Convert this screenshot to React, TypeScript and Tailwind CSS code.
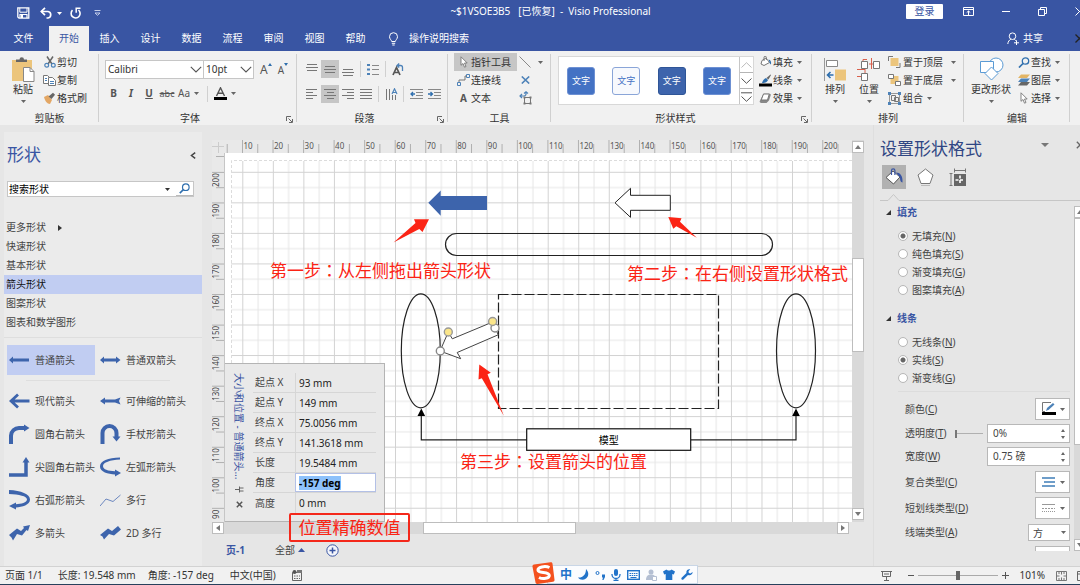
import React, { useEffect, useRef } from "react";

type Kids = { children?: React.ReactNode };

/* ---------- small shared pieces ---------- */

function Svg({ w, h, children, className = "" }: Kids & { w: number; h: number; className?: string }) {
  return (
    <svg width={w} height={h} viewBox={`0 0 ${w} ${h}`} fill="none" className={`shrink-0 ${className}`} aria-hidden="true">
      {children}
    </svg>
  );
}

function Caret({ className = "text-[#666]" }: { className?: string }) {
  return (
    <Svg w={5} h={3} className={className}>
      <path d="M0 0h5L2.5 3z" fill="currentColor" />
    </Svg>
  );
}

function Chevron() {
  return (
    <Svg w={12} h={7} className="pointer-events-none">
      <path d="M.8.8 6 6 11.2.8" stroke="#555" strokeWidth="1.1" />
    </Svg>
  );
}

function Launcher() {
  return (
    <button aria-label="对话框启动器" className="absolute right-1 bottom-0.5">
      <Svg w={7} h={7}>
        <path d="M.5 5V.5H5M2.5 2.5l3.500 3.500M6.500 3v3.500H3" stroke="#666" />
      </Svg>
    </button>
  );
}

function Group({ label, className, launcher, children }: Kids & { label: string; className: string; launcher?: boolean }) {
  return (
    <section aria-label={label} className={`relative flex shrink-0 flex-col pt-0.5 ${className}`}>
      <div className="flex h-[58px]">{children}</div>
      <div className="text-center leading-[14px] text-[#333]">{label}</div>
      {launcher && <Launcher />}
      <span className="absolute top-[3px] right-0 bottom-[3px] w-px bg-[#d0d0d0]" />
    </section>
  );
}

function Row({ icon, text, caret, className = "" }: { icon: React.ReactNode; text: string; caret?: boolean; className?: string }) {
  return (
    <button className={`flex h-[18px] items-center whitespace-nowrap ${className}`}>
      <span className="flex w-[15px] justify-center">{icon}</span>
      <span>{text}</span>
      {caret && <span className="ml-1"><Caret /></span>}
    </button>
  );
}

function BigButton({ icon, text, className }: { icon: React.ReactNode; text: string; className: string }) {
  return (
    <button className={`flex shrink-0 flex-col items-center pt-1 ${className}`}>
      {icon}
      <span className="leading-[14px] whitespace-nowrap">{text}</span>
      <span className="mt-1"><Caret /></span>
    </button>
  );
}

function Divider() {
  return <span className="mx-[3px] h-4 w-px bg-[#d0d0d0]" />;
}

/* ---------- title bar and tabs ---------- */

function TitleBar() {
  return (
    <header className="flex h-[26px] shrink-0 items-center overflow-hidden text-white">
      <div className="flex flex-1 items-center pl-[17px]">
        <button aria-label="保存">
          <Svg w={13} h={12}>
            <path d="M.8.8h11v10.400H2L.8 10z" stroke="#fff" strokeWidth="1.3" />
            <path d="M2.800 1v4.200h7.200V1" stroke="#fff" />
            <path d="M3 11V7.500h7V11" stroke="#fff" strokeWidth="1.2" />
            <path d="M4 8h2v3H4z" fill="#fff" />
          </Svg>
        </button>
        <button aria-label="撤消" className="ml-[10px] flex items-center gap-1">
          <Svg w={13} h={12}>
            <path d="M1 4.500h7a3.300 3.300 0 0 1 0 6.500H6.500" stroke="#fff" strokeWidth="1.7" />
            <path d="M5 .8 1.300 4.500 5 8.200" stroke="#fff" strokeWidth="1.7" />
          </Svg>
          <Caret className="text-white" />
        </button>
        <button aria-label="恢复" className="ml-[7px]">
          <Svg w={13} h={13}>
            <path d="M3.500 3.200A4.500 4.500 0 1 0 9.500 3" stroke="#fff" strokeWidth="1.6" />
            <path d="M11.500 1.200H7.200v4.500" stroke="#fff" strokeWidth="1.5" />
          </Svg>
        </button>
        <button aria-label="自定义快速访问工具栏" className="ml-3">
          <Svg w={7} h={6}>
            <path d="M.5.5h6M1 3l2.500 2.300L6 3z" stroke="#c5cfea" />
          </Svg>
        </button>
      </div>
      <h1 className="pb-[3px] whitespace-pre">~$1VSOE3B5   [已恢复]  -  Visio Professional</h1>
      <div className="-mr-1 flex flex-1 items-center justify-end">
        <button className="mb-[3px] h-[15px] w-[37px] rounded-[1px] bg-white leading-[15px] text-[#3955a3]">登录</button>
        <button aria-label="功能区显示选项" className="mb-1 ml-5">
          <Svg w={11} h={9}>
            <path d="M.5.5h10v8H.5zM.5 2.500h10M5.500 8V4M3.700 5.600l1.800-1.600 1.800 1.600" stroke="#fff" />
          </Svg>
        </button>
        <button aria-label="最小化" className="mb-1 ml-7">
          <Svg w={8} h={9}>
            <path d="M0 4.500h8" stroke="#fff" />
          </Svg>
        </button>
        <button aria-label="还原" className="mb-1 ml-7">
          <Svg w={9} h={9}>
            <path d="M.5 2.500h6v6h-6zM2.500 2.500v-2h6v6h-2" stroke="#fff" />
          </Svg>
        </button>
        <button aria-label="关闭" className="mb-1 ml-7">
          <Svg w={9} h={9}>
            <path d="m.5.5 8 8m0-8-8 8" stroke="#fff" />
          </Svg>
        </button>
      </div>
    </header>
  );
}

function Tabs() {
  const tabs = ["插入", "设计", "数据", "流程", "审阅", "视图", "帮助"];
  return (
    <nav className="flex h-[25px] shrink-0 items-stretch overflow-hidden text-white">
      <button className="w-[47px]">文件</button>
      <button className="ml-0.5 w-10 bg-[#f1f1f1] text-[#3955a3]">开始</button>
      {tabs.map((t) => (
        <button key={t} className="w-[41px]">{t}</button>
      ))}
      <button className="ml-3 flex items-center gap-[10px]">
        <Svg w={11} h={14}>
          <path d="M3.700 9.500C3.500 8 1.500 7 1.500 4.700a4 4 0 0 1 8 0C9.500 7 7.500 8 7.300 9.500zM3.800 11.300h3.400M4.300 13h2.400" stroke="#fff" />
        </Svg>
        操作说明搜索
      </button>
      <div className="flex-1" />
      <button className="flex items-center gap-1">
        <Svg w={12} h={13}>
          <circle cx="5.5" cy="4.2" r="3.3" stroke="#fff" />
          <path d="M.8 12c.2-2.500 1.500-4 3-4.700M7.300 7.300c.8.4 1.200.8 1.600 1.500M7 10.800h5M9.500 8.300v5" stroke="#fff" />
        </Svg>
        共享
      </button>
      <button aria-label="反馈" className="-mr-1 ml-8">
        <Svg w={9} h={9}>
          <path d="m.5.5 8 8m0-8-8 8" stroke="#222" strokeWidth="1.3" />
        </Svg>
      </button>
    </nav>
  );
}

/* ---------- ribbon ---------- */

function ClipboardGroup() {
  return (
    <Group label="剪贴板" className="w-[99px]">
      <BigButton
        className="w-[42px] pl-1"
        text="粘贴"
        icon={
          <Svg w={24} h={25}>
            <path d="M1 3h20v21H1z" fill="#ecc57c" />
            <path d="M5 5V2.500h3.500a2 2 0 0 1 4.500 0H16V5z" fill="#666" />
            <path d="M12.500 10.500H19l4 4v10H12.500z" fill="#fff" stroke="#888" />
            <path d="M19 10.500v4h4" stroke="#888" />
          </Svg>
        }
      />
      <div>
        <Row
          text="剪切"
          icon={
            <Svg w={12} h={12}>
              <path d="m3 .5 5 7.500M9 .5 4 8" stroke="#666" strokeWidth="1.5" />
              <circle cx="2.7" cy="9.3" r="1.9" stroke="#4d82b8" strokeWidth="1.2" />
              <circle cx="9.3" cy="9.3" r="1.9" stroke="#4d82b8" strokeWidth="1.2" />
            </Svg>
          }
        />
        <Row
          text="复制"
          icon={
            <Svg w={13} h={11}>
              <path d="M.5.5h4l2 2v6h-6z" fill="#fff" stroke="#777" />
              <path d="M5.500 2.500h4l3 3v5h-7z" fill="#fff" stroke="#777" />
              <path d="M7 6.500h4M7 8.500h4M2 3.500h2M2 5.500h2" stroke="#4d82b8" />
            </Svg>
          }
        />
        <Row
          text="格式刷"
          icon={
            <Svg w={13} h={12}>
              <path d="M1 5l4-2 4 5-2 4c-3 0-5-3-6-7z" fill="#e3a765" />
              <path d="M5.500 4.500 10 .8l2 2L8.500 7z" fill="#666" />
            </Svg>
          }
        />
      </div>
    </Group>
  );
}

function FontGroup() {
  return (
    <Group label="字体" className="w-[198px] pr-4" launcher>
      <div className="flex flex-col pt-[7px] pl-1.5">
        <div className="flex items-center">
          <div className="relative flex items-center">
            <select aria-label="字体" className="h-[19px] w-[99px] appearance-none border border-[#c6c6c6] bg-white pl-0.5">
              <option>Calibri</option>
            </select>
            <span className="pointer-events-none absolute right-0.5"><Chevron /></span>
          </div>
          <div className="relative flex items-center">
            <select aria-label="字号" className="-ml-px h-[19px] w-[51px] appearance-none border border-[#c6c6c6] bg-white pl-0.5">
              <option>10pt</option>
            </select>
            <span className="pointer-events-none absolute right-0.5"><Chevron /></span>
          </div>
          <button aria-label="增大字号" className="ml-1.5 flex text-[12px] leading-[14px] text-[#555]">
            A
            <Svg w={4} h={3}><path d="M0 3h4L2 0z" fill="#2f6fae" /></Svg>
          </button>
          <button aria-label="减小字号" className="ml-1.5 flex text-[10px] leading-[14px] text-[#555]">
            A
            <Svg w={4} h={3}><path d="M0 0h4L2 3z" fill="#2f6fae" /></Svg>
          </button>
        </div>
        <div className="mt-[5px] flex h-[19px] items-center text-[#555]">
          <button className="w-[17px] font-bold">B</button>
          <button className="w-[18px] font-bold italic">I</button>
          <button className="w-[18px] font-bold underline">U</button>
          <button className="w-[18px] text-[9px] line-through">abc</button>
          <button className="flex items-center gap-1 pl-0.5">Aa <Caret /></button>
          <span className="mr-1.5 ml-2 h-4 w-px bg-[#d0d0d0]" />
          <button aria-label="字体颜色" className="flex items-center gap-1">
            <Svg w={13} h={14}>
              <path d="M2.500 9 6.500.8 10.500 9M4 6.300h5" stroke="#555" strokeWidth="1.4" />
              <path d="M0 10h13v3H0z" fill="#000" />
            </Svg>
            <Caret />
          </button>
        </div>
      </div>
    </Group>
  );
}

function LinesIcon({ d }: { d: string }) {
  return (
    <Svg w={12} h={13}>
      <path d={d} stroke="#777" />
    </Svg>
  );
}

function ParaButton({ label, on, children }: Kids & { label: string; on?: boolean }) {
  return (
    <button aria-label={label} className={`flex h-[18px] w-[18px] shrink-0 items-center justify-center ${on ? "bg-[#c6c6c6]" : ""}`}>
      {children}
    </button>
  );
}

function ParagraphGroup() {
  return (
    <Group label="段落" className="w-[151px] pr-4" launcher>
      <div className="flex flex-col gap-[7px] pt-[7px] pl-1.5">
        <div className="flex items-center">
          <ParaButton label="顶端对齐"><LinesIcon d="M1 1.500h10M0 4.500h12M1 7.500h10" /></ParaButton>
          <ParaButton label="中部对齐" on><LinesIcon d="M1 3.500h10M0 6.500h12M1 9.500h10" /></ParaButton>
          <ParaButton label="底端对齐"><LinesIcon d="M1 6.500h10M0 9.500h12M1 12.500h10" /></ParaButton>
          <Divider />
          <ParaButton label="项目符号">
            <Svg w={12} h={13}>
              <path d="M0 1h3v2H0zM0 5.500h3v2H0zM0 10h3v2H0z" fill="#4d82b8" />
              <path d="M5 2.500h7M5 6.500h7M5 11.500h7" stroke="#888" />
            </Svg>
          </ParaButton>
          <Divider />
          <ParaButton label="旋转文本">
            <Svg w={12} h={13}>
              <path d="M1 12 4.500 4.500 8 12M2.500 9.500h4" stroke="#555" strokeWidth="1.7" />
              <path d="M5 2.500h3.500a2 2 0 0 1 2 2V8M7.200.5 5 2.500l2.200 2" stroke="#4d82b8" strokeWidth="1.3" />
            </Svg>
          </ParaButton>
        </div>
        <div className="flex items-center">
          <ParaButton label="左对齐"><LinesIcon d="M0 1.500h11M0 4.500h7M0 7.500h11M0 10.500h7" /></ParaButton>
          <ParaButton label="居中" on><LinesIcon d="M0 1.500h12M3 4.500h7M0 7.500h12M3 10.500h7" /></ParaButton>
          <ParaButton label="右对齐"><LinesIcon d="M0 1.500h12M5 4.500h7M0 7.500h12M5 10.500h7" /></ParaButton>
          <ParaButton label="两端对齐"><LinesIcon d="M0 1.500h12M0 4.500h12M0 7.500h12M0 10.500h12" /></ParaButton>
          <Divider />
          <ParaButton label="文字方向">
            <Svg w={13} h={13}>
              <path d="M1.500 1v11M4.500 1v11M7.500 7v5M10.500 7v5" stroke="#777" />
              <path d="M7 6 9.500.8 12 6M8 4.500h3" stroke="#4d82b8" strokeWidth="1.2" />
            </Svg>
          </ParaButton>
          <Divider />
          <ParaButton label="减少缩进">
            <Svg w={13} h={11}>
              <path d="M0 .5h13M6 3.500h7M6 6.500h7M0 9.500h13" stroke="#888" />
              <path d="M5 5H1M3 3 1 5l2 2" stroke="#2f6fae" strokeWidth="1.3" />
            </Svg>
          </ParaButton>
          <ParaButton label="增加缩进">
            <Svg w={13} h={11}>
              <path d="M0 .5h13M6 3.500h7M6 6.500h7M0 9.500h13" stroke="#888" />
              <path d="M0 5h4M2.500 3l2 2-2 2" stroke="#2f6fae" strokeWidth="1.3" />
            </Svg>
          </ParaButton>
        </div>
      </div>
    </Group>
  );
}

const Pointer = (
  <Svg w={8} h={12}>
    <path d="M1 .8v8.500l2-1.800 1.500 3.700 1.500-.7-1.500-3.500h2.700z" fill="#fff" stroke="#777" strokeWidth=".9" />
  </Svg>
);

function ToolsGroup() {
  return (
    <Group label="工具" className="w-[103px]">
      <div className="pl-1.5">
        <Row className="w-[63px] bg-[#c6c6c6] pl-0.5" text="指针工具" icon={Pointer} />
        <Row
          className="pl-0.5"
          text="连接线"
          icon={
            <Svg w={14} h={12}>
              <path d="M.5 8.500h3v3h-3zM9.500.5h3v3h-3z" stroke="#4d82b8" />
              <path d="M2 8V6h6V2h1.500" stroke="#777" />
            </Svg>
          }
        />
        <Row
          className="pl-0.5"
          text="文本"
          icon={<span className="font-bold text-[#555]">A</span>}
        />
      </div>
      <div className="ml-[2px]">
        <button aria-label="线条" className="flex h-[18px] items-center gap-[7px]">
          <Svg w={12} h={12}><path d="m.5.5 11 11" stroke="#888" /></Svg>
          <Caret />
        </button>
        <button aria-label="连接点" className="flex h-[18px] items-center pl-0.5">
          <Svg w={9} h={8}><path d="m.8.5 7.400 7M8.200.5.8 7.500" stroke="#4d82b8" strokeWidth="1.6" /></Svg>
        </button>
        <button aria-label="文本块" className="flex h-[18px] items-center">
          <Svg w={14} h={14}>
            <path d="M1 5h4a2 2 0 0 0 2-2V1M5 2.500 7 .8l2 1.700M3 3 1 5l2 2" stroke="#4d82b8" strokeWidth="1.2" />
            <path d="M5.500 6.500h6v6h-6z" stroke="#777" />
            <path d="M4.500 5.500h2v2h-2zM10.500 5.500h2v2h-2zM4.500 11.500h2v2h-2zM10.500 11.500h2v2h-2z" fill="#777" />
          </Svg>
        </button>
      </div>
    </Group>
  );
}

function StylesGroup() {
  const tiles = [
    "bg-[#4472c4] border-[#6d90d3] text-white",
    "bg-[#f7f9fd] border-[#8aa5d8] text-[#4472c4]",
    "bg-[#3d64ac] border-[#2f5597] text-white",
    "bg-[#4472c4] border-[#6d90d3] text-white",
  ];
  return (
    <Group label="形状样式" className="w-[261px] pr-3" launcher>
      <div className="mt-[3px] ml-[7px] flex h-[49px] w-[196px] shrink-0 border border-[#d8d8d8] bg-white">
        <div className="flex flex-1 items-center justify-between pr-2 pl-2">
          {tiles.map((t, i) => (
            <button key={i} className={`h-7 w-7 rounded-[3px] border text-[9px] leading-[26px] ${t}`}>文字</button>
          ))}
        </div>
        <div className="flex w-[14px] flex-col divide-y divide-[#b5b5b5] border-l border-[#c6c6c6]">
          <button aria-label="上一行" className="flex flex-1 items-center justify-center">
            <Svg w={11} h={6}><path d="M.5 5.500 5.500.7l5 4.800" stroke="#bbb" /></Svg>
          </button>
          <button aria-label="下一行" className="flex flex-1 items-center justify-center">
            <Svg w={11} h={6}><path d="m.5.5 5 4.800 5-4.800" stroke="#555" /></Svg>
          </button>
          <button aria-label="其他" className="flex flex-1 items-center justify-center">
            <Svg w={11} h={10}><path d="M0 .8h11M.5 4.500l5 4.800 5-4.800" stroke="#555" /></Svg>
          </button>
        </div>
      </div>
      <div className="ml-1">
        <Row
          caret
          text="填充"
          icon={
            <Svg w={13} h={12}>
              <path d="M3 4.500 7 2l3.500 4.500L5 9.500 2 8z" fill="#fff" stroke="#777" />
              <path d="M5 5V1.500a1.200 1.200 0 0 1 2.400 0V4" stroke="#777" />
              <path d="M9.500 3.500c2 .5 3 2 2.500 5-1-.5-1.500-1.500-1.500-2.500z" fill="#2f6fae" />
            </Svg>
          }
        />
        <Row
          caret
          text="线条"
          icon={
            <Svg w={13} h={13}>
              <path d="M0 9.500h13v3H0z" fill="#000" />
              <path d="M3 9c1-3 2-4 4-5l2 2c-1 2-2 3-6 3z" fill="#2f6fae" />
              <path d="m7.500 4 4-3.500.5.5-2.500 4.500z" fill="#666" />
            </Svg>
          }
        />
        <Row
          caret
          text="效果"
          icon={
            <Svg w={13} h={11}>
              <path d="M4.500.8h6a1.200 1.200 0 0 1 1.200 1.500L10 7.500 7.500 10H2.200A1.500 1.500 0 0 1 .8 8z" fill="#888" />
              <path d="M4.500 1h5.800L8.500 7H2.200z" fill="#fff" stroke="#777" />
            </Svg>
          }
        />
      </div>
    </Group>
  );
}

function ArrangeItem({ icon, text, wide }: { icon: React.ReactNode; text: string; wide?: boolean }) {
  return (
    <button className="flex h-[18px] items-center whitespace-nowrap">
      <span className="flex w-[15px]">{icon}</span>
      {text}
      <span className={wide ? "ml-2" : "ml-1"}><Caret /></span>
    </button>
  );
}

function ArrangeGroup() {
  return (
    <Group label="排列" className="w-[152px]">
      <div className="flex pl-0.5">
        <BigButton
          className="w-[42px]"
          text="排列"
          icon={
            <Svg w={24} h={25}>
              <path d="M1.500 1v23" stroke="#999" />
              <path d="M3.500 3.500h11v6h-11z" fill="#fff" stroke="#888" />
              <path d="M12 12.500h11v11H12z" fill="#ecc57c" />
              <path d="M10.500 18H4.500M7.500 15l-3 3 3 3" stroke="#2f6fae" strokeWidth="1.6" />
            </Svg>
          }
        />
        <BigButton
          className="w-[26px]"
          text="位置"
          icon={
            <Svg w={24} h={25}>
              <path d="M6 7V2.500h4M12 7h5M14.500 1v11M0 12.500h8M0 19.500h4M8 12v4" stroke="#d9604c" />
              <path d="M4.500 4.500h6v7h-6zM16.500 4.500h6v7h-6zM4.500 16.500h6v7h-6z" fill="#fff" stroke="#777" />
            </Svg>
          }
        />
        <div className="ml-1.5">
          <ArrangeItem
            wide
            text="置于顶层"
            icon={
              <Svg w={13} h={12}>
                <path d="M.5 5V.5H5M8 11.500h4V7" stroke="#777" />
                <path d="M2.500 2h8v8h-8z" fill="#ecc57c" />
              </Svg>
            }
          />
          <ArrangeItem
            wide
            text="置于底层"
            icon={
              <Svg w={13} h={12}>
                <path d="M2.500 2h8v8h-8z" fill="#ecc57c" />
                <path d="M.5.5h5v4h-5zM7.500 7.500h5v4h-5z" fill="#fff" stroke="#777" />
              </Svg>
            }
          />
          <ArrangeItem
            text="组合"
            icon={
              <Svg w={13} h={13}>
                <path d="M1.500 1.500h10v10h-10z" stroke="#999" />
                <path d="M3.500 3.500h4v5h-4zM6.500 5.500h4v4h-4z" stroke="#777" />
                <path d="M0 0h3v3H0zM10 0h3v3h-3zM0 10h3v3H0zM10 10h3v3h-3z" fill="#4d82b8" />
              </Svg>
            }
          />
        </div>
      </div>
    </Group>
  );
}

function EditGroup() {
  return (
    <Group label="编辑" className="w-[106px]">
      <BigButton
        className="w-[50px] pl-1"
        text="更改形状"
        icon={
          <Svg w={25} h={25}>
            <circle cx="17" cy="8" r="7" fill="#fff" stroke="#5b9bd5" />
            <path d="M1.500 4.500h13v11h-13z" fill="#fff" stroke="#5b9bd5" />
            <path d="m12.500 10 6.500 6.500-6.500 6.500L6 16.500z" fill="#fff" stroke="#5b9bd5" />
          </Svg>
        }
      />
      <div className="ml-0.5">
        <Row
          caret
          text="查找"
          icon={
            <Svg w={12} h={11}>
              <circle cx="7.5" cy="4" r="3.2" stroke="#2f6fae" strokeWidth="1.3" />
              <path d="m5 6.500-4 4" stroke="#2f6fae" strokeWidth="1.7" />
            </Svg>
          }
        />
        <Row
          caret
          text="图层"
          icon={
            <Svg w={12} h={12}>
              <path d="M3 .5h9L9 4H0z" fill="#e3b565" />
              <path d="M3 4.500h9L9 8H0z" fill="#4d82b8" />
              <path d="M3 8h9l-3 3.500H0z" fill="#666" />
            </Svg>
          }
        />
        <Row caret text="选择" icon={Pointer} />
      </div>
    </Group>
  );
}

/* ---------- shapes pane ---------- */

const BLUE = "#3d64ac";

const stencils: { name: string; art: React.ReactNode }[] = [
  { name: "普通箭头", art: <path d="m0 10 4-3.500v2h16v3H4v2z" fill={BLUE} /> },
  { name: "普通双箭头", art: <path d="m0 10 4-3.500v2h12v-2L20.500 10 16 13.500v-2H4v2z" fill={BLUE} /> },
  { name: "现代箭头", art: <path d="M20.500 10H2M9 3.500 2 10l7 6.500" stroke={BLUE} strokeWidth="2.8" /> },
  { name: "可伸缩的箭头", art: <path d="m0 10 5-3.500v2h10l5.500-2L19 10l1.500 3.500-5.500-2H5v2z" fill={BLUE} /> },
  { name: "圆角右箭头", art: <><path d="M2 20v-8.500a8 8 0 0 1 8-7.500h6" stroke={BLUE} strokeWidth="4" /><path d="m15 .5 5.500 3.500-5.500 3.500z" fill={BLUE} /></> },
  { name: "手杖形箭头", art: <><path d="M2.500 20V9a7 7 0 0 1 14 0v5" stroke={BLUE} strokeWidth="4" /><path d="M12.500 12.500h8l-4 5z" fill={BLUE} /></> },
  { name: "尖圆角右箭头", art: <><path d="M0 18h17V5" stroke={BLUE} strokeWidth="3.5" /><path d="M13.500 5.500h7L17 0z" fill={BLUE} /></> },
  { name: "左弧形箭头", art: <path d="M20 .5C8 .5 0 4 0 9.500S8 17 15 17.500v2L21 16l-6-3.500v1.700C8 14 3 12.500 3 9S10 3 20 2.500z" fill={BLUE} /> },
  { name: "右弧形箭头", art: <path d="M0 0c12 .5 21 4 21 9.500S13 17 7 17.500v2L0 16l7-3.500v1.700c5-.2 11-1.700 11-4.700C18 6 10 4.500 0 4z" fill={BLUE} /> },
  { name: "多行", art: <path d="m0 16 6-7 7 2.500L20.500 5" stroke="#6c87bf" /> },
  { name: "多箭头", art: <path d="m0 12 8-6.500 4 2.500 3-3-1-1.500L21 2l-2 6-1.500-1L13 12.500l-5-1.500-4 6.500-1.500-3z" fill={BLUE} /> },
  { name: "2D 多行", art: <path d="m0 12 8-6.500 4 2.500 6-5 3 3.500-7 6-5-1.500-5 5.500-1.500-3z" fill={BLUE} /> },
];

function Stencil({ index }: { index: number }) {
  const s = stencils[index];
  return (
    <button className={`flex w-[88px] items-center gap-1 pl-0.5 whitespace-nowrap ${index === 0 ? "bg-[#c1cdf2]" : ""}`}>
      <Svg w={22} h={21}>{s.art}</Svg>
      <span>{s.name}</span>
    </button>
  );
}

function ShapesPane() {
  return (
    <aside className="mt-[7px] ml-1 flex w-[198px] shrink-0 flex-col bg-[#ebebeb] text-[#444]">
      <div className="flex items-center justify-between pt-3 pr-1.5 pl-[3px]">
        <h2 className="text-[17px] leading-[22px] text-[#3955a3]">形状</h2>
        <button aria-label="折叠">
          <Svg w={6} h={7}><path d="M5.200.7 1.500 3.500l3.700 2.800" stroke="#444" strokeWidth="1.5" /></Svg>
        </button>
      </div>
      <div className="mt-[15px] mr-2 ml-[3px] flex h-4 items-center border border-[#c6c6c6] bg-white text-black">
        <input aria-label="搜索形状" defaultValue="搜索形状" className="min-w-0 flex-1 bg-transparent pl-px outline-none" />
        <Caret className="text-[#333]" />
        <button aria-label="搜索" className="ml-1.5 flex h-full w-[17px] items-center justify-center border-b border-[#bbb]">
          <Svg w={11} h={11}>
            <circle cx="6.8" cy="4.2" r="3.3" stroke="#2f6fae" strokeWidth="1.2" />
            <path d="M4.500 6.500.8 10.200" stroke="#2f6fae" strokeWidth="1.7" />
          </Svg>
        </button>
      </div>
      <div className="mt-[21px] flex flex-col">
        <button className="flex h-[19px] items-center pl-0.5">
          更多形状
          <Svg w={4} h={6} className="ml-3"><path d="M0 0v6l4-3z" fill="#333" /></Svg>
        </button>
        {["快速形状", "基本形状"].map((t) => (
          <button key={t} className="h-[19px] pl-0.5 text-left">{t}</button>
        ))}
        <button className="h-[19px] bg-[#c1cdf2] pl-0.5 text-left text-[#111]">箭头形状</button>
        {["图案形状", "图表和数学图形"].map((t) => (
          <button key={t} className="h-[19px] pl-0.5 text-left">{t}</button>
        ))}
      </div>
      <hr className="mt-[5px] border-[#dedede]" />
      <div className="mt-[7px] flex h-[30px] gap-[3px] pl-[3px]">
        <Stencil index={0} />
        <Stencil index={1} />
      </div>
      <hr className="mt-[5px] mr-8 ml-[22px] border-[#dedede]" />
      <div className="mt-1 grid auto-rows-[33px] grid-cols-[88px_88px] gap-x-[3px] pl-[3px]">
        {stencils.slice(2).map((s, i) => (
          <Stencil key={s.name} index={i + 2} />
        ))}
      </div>
    </aside>
  );
}

/* ---------- drawing area ---------- */

const STEP = 30.54;

function TopRuler() {
  const ticks = Array.from({ length: 20 }, (_, i) => i);
  return (
    <svg className="h-[13px] w-full bg-[#e9e9e9]" aria-hidden="true">
      <path d="M6.500 2v11M0 6.500h12" stroke="#ccc" />
      {ticks.map((i) => (
        <g key={i}>
          <path d={`M${30.5 + i * STEP} 0v13`} stroke="#b0b0b0" />
          <path d={`M${15.2 + i * STEP} 4v9`} stroke="#b0b0b0" />
          <text x={31.5 + i * STEP} y="9" fontSize="8" fill="#555">{(i + 1) * 10}</text>
        </g>
      ))}
      <path d={`M${15.2 + 20 * STEP} 4v9`} stroke="#b0b0b0" />
    </svg>
  );
}

function SideRuler() {
  const ticks = Array.from({ length: 12 }, (_, i) => i);
  return (
    <svg className="h-full w-3 shrink-0 bg-[#e9e9e9]" aria-hidden="true">
      <path d="M4 3.500h8" stroke="#b0b0b0" />
      {ticks.map((i) => (
        <g key={i}>
          <path d={`M0 ${19.4 + i * STEP}h12`} stroke="#b0b0b0" />
          <path d={`M4 ${34.7 + i * STEP}h8`} stroke="#b0b0b0" />
          <text transform={`translate(7 ${(i < 11 ? 34 : 30) + i * STEP}) rotate(-90)`} fontSize="8" fill="#444">{200 - i * 10}</text>
        </g>
      ))}
    </svg>
  );
}

function StepNote({ x, y, step, text }: { x: number; y: number; step: string; text: string }) {
  return (
    <text x={x} y={y}>
      {step}
      <tspan className='font-["Noto_Sans_CJK_TC",sans-serif]'>：</tspan>
      {text}
    </text>
  );
}

function Drawing() {
  return (
    <svg className="block h-full w-full bg-white" role="img" aria-label="绘图页">
      <defs>
        <pattern id="grid" x="17.3" y="18.8" width={STEP} height={STEP} patternUnits="userSpaceOnUse">
          <path d="M15.800 0v30.540M0 15.800h30.540" stroke="#e6e6e6" />
          <path d="M.5 0v30.540M0 .5h30.540" stroke="#d2d2d2" />
        </pattern>
      </defs>
      <rect x="6" y="8" width="100%" height="100%" fill="url(#grid)" />
      <path d="M6.500 400V7.500H2000" stroke="#dcdcdc" strokeDasharray="3 2" fill="none" />
      <g transform="translate(-225 -153)">
        <path d="m428.300 202.800 12.400-12.300v5.600H487v14h-46.300v5.700z" fill={BLUE} />
        <path d="m615 202.800 15.500-14.500v7h39.800v15h-39.800v7z" fill="#fff" stroke="#222" />
        <rect x="445.5" y="233.5" width="327" height="22" rx="11" fill="none" stroke="#222" strokeWidth="1.2" />
        <ellipse cx="420.8" cy="350.8" rx="19.5" ry="57" stroke="#222" strokeWidth="1.2" fill="none" />
        <ellipse cx="796" cy="350.8" rx="19.5" ry="57" stroke="#222" strokeWidth="1.2" fill="none" />
        <rect x="498.5" y="294.5" width="220" height="114" fill="none" stroke="#222" strokeWidth="1.2" strokeDasharray="10 3" />
        <path d="M421.300 412v27.800H527M691 439.800h105V412" fill="none" stroke="#222" strokeWidth="1.2" />
        <path d="m421.300 408.500 3.800 7.500h-7.600zM796 408.500l3.800 7.500h-7.600z" fill="#000" />
        <rect x="526.7" y="428.8" width="164" height="21.5" fill="#fff" stroke="#111" strokeWidth="1.2" />
        <text x="608.7" y="443.5" textAnchor="middle" fontSize="10" fill="#000">模型</text>
        <path d="m440 351 8.300-19 4 6.800L492.700 322l5.500 12.800-41 17.700 3.500 6.200z" fill="#fff" stroke="#444" />
        <circle cx="440.3" cy="351" r="4" fill="#fff" stroke="#888" strokeWidth="1.4" />
        <circle cx="495" cy="328" r="4" fill="#fff" stroke="#888" strokeWidth="1.4" />
        <circle cx="448.3" cy="332" r="4" fill="#fbe68a" stroke="#999" strokeWidth="1.4" />
        <circle cx="492.6" cy="321.5" r="4" fill="#fbe68a" stroke="#999" strokeWidth="1.4" />
        <g fill="#fb2415">
          <path d="m393.500 242.500 22-19.500-1.500-3.700h15l-6.500 12.700-3.200-3z" />
          <path d="m668.300 217 13.200 1.300-1.500 3.400 16.800 16-20.500-11.500-3 2.500z" />
          <path d="m479.300 364.500 11.500 8.200-3.300 1.500 16.300 41.600-22-37.600-3.300 1.200z" />
          <g fontSize="17">
            <StepNote x={270} y={277} step="第一步" text="从左侧拖出箭头形状" />
            <StepNote x={627} y={280} step="第二步" text="在右侧设置形状格式" />
            <StepNote x={460} y={468} step="第三步" text="设置箭头的位置" />
          </g>
        </g>
      </g>
    </svg>
  );
}

function SizePanel() {
  const angle = useRef<HTMLInputElement>(null);
  useEffect(() => {
    angle.current?.focus();
    angle.current?.select();
  }, []);
  const rows = [
    ["起点 X", "93 mm"],
    ["起点 Y", "149 mm"],
    ["终点 X", "75.0056 mm"],
    ["终点 Y", "141.3618 mm"],
    ["长度", "19.5484 mm"],
    ["角度", "-157 deg"],
    ["高度", "0 mm"],
  ];
  return (
    <div className="absolute bottom-0 left-0 flex w-40 border border-l-0 border-[#b4b4b4] bg-[#e9e9e9] pt-[9px] pr-2 pb-2 text-[#444]">
      <div className="flex w-7 shrink-0 flex-col items-center">
        <span className="leading-3 whitespace-nowrap text-[#3955a3] [text-orientation:sideways] [writing-mode:vertical-rl]">大小和位置 - 普通箭头...</span>
        <button aria-label="固定" className="mt-[7px]">
          <Svg w={9} h={7}><path d="M0 3.500h4M4.500.5v6M4.500 2h4M4.500 5h4" stroke="#666" /></Svg>
        </button>
        <button aria-label="关闭" className="mt-2">
          <Svg w={7} h={7}><path d="m.8.8 5.400 5.400m0-5.400L.8 6.200" stroke="#555" strokeWidth="1.5" /></Svg>
        </button>
      </div>
      <div className="min-w-0 flex-1">
        {rows.map(([k, v]) => (
          <label key={k} className="flex h-5 items-center border-b border-[#d6d6d6] last:border-0">
            <span className="w-[42px] shrink-0 pl-0.5">{k}</span>
            {k === "角度" ? (
              <input ref={angle} defaultValue={v} className="h-[19px] min-w-0 flex-1 border border-[#b3c0e6] bg-white pl-[3px] font-bold text-black outline-none selection:bg-[#8dc1fb] selection:text-black" />
            ) : (
              <input defaultValue={v} className="h-full min-w-0 flex-1 border-l border-[#d6d6d6] bg-transparent pl-[3px] text-[#222] outline-none" />
            )}
          </label>
        ))}
      </div>
    </div>
  );
}

function ScrollButton({ label, d }: { label: string; d: string }) {
  return (
    <button aria-label={label} className="flex h-3 w-3 shrink-0 items-center justify-center border border-[#bdbdbd] bg-white">
      <Svg w={6} h={6}><path d={d} fill="#777" /></Svg>
    </button>
  );
}

function Workspace() {
  return (
    <main className="relative mt-[15px] mr-[9px] ml-[10px] flex min-w-0 flex-1 flex-col">
      <div className="flex min-h-0 flex-1">
        <div className="flex min-w-0 flex-1 flex-col">
          <TopRuler />
          <div className="flex min-h-0 flex-1">
            <SideRuler />
            <div className="relative min-w-0 flex-1 overflow-hidden border-l border-[#c6c6c6]">
              <Drawing />
              <SizePanel />
            </div>
          </div>
        </div>
        <div className="flex w-3 shrink-0 flex-col bg-[#d9d9d9] pt-px pb-0.5">
          <ScrollButton label="向上滚动" d="M0 5h6L3 1z" />
          <span className="flex-[106]" />
          <span className="flex-[93] border border-[#bdbdbd] bg-white" />
          <span className="flex-[157]" />
          <ScrollButton label="向下滚动" d="M0 1h6L3 5z" />
        </div>
      </div>
      <div className="mr-[15px] flex h-3 shrink-0 bg-[#d9d9d9]">
        <ScrollButton label="向左滚动" d="M5 0v6L1 3z" />
        <span className="flex-[200]" />
        <span className="flex-[151] border border-[#bdbdbd] bg-white" />
        <span className="flex-[262]" />
        <ScrollButton label="向右滚动" d="M1 0v6l4-3z" />
      </div>
      <div className="flex h-8 shrink-0 items-center pl-[14px]">
        <button className="font-bold text-[#3955a3]">页-1</button>
        <button className="ml-[30px] flex items-center gap-[3px] text-[#444]">
          全部
          <Svg w={7} h={4}><path d="M0 4h7L3.500 0z" fill="#3955a3" /></Svg>
        </button>
        <button aria-label="插入页" className="ml-[21px]">
          <Svg w={13} h={13}>
            <circle cx="6.5" cy="6.5" r="5.7" fill="#f4f6fb" stroke="#3955a3" />
            <path d="M3.500 6.500h6M6.500 3.500v6" stroke="#3955a3" strokeWidth="1.5" />
          </Svg>
        </button>
      </div>
      <div className="absolute bottom-6 left-[77px] h-[29px] w-[121px] rounded-[2px] border-2 border-[#f4281b] text-center text-[17px] leading-[25px] text-[#fb2415]">
        位置精确数值
      </div>
    </main>
  );
}

/* ---------- format pane ---------- */

function Radio({ name, text, hot, on }: { name: string; text: string; hot: string; on?: boolean }) {
  return (
    <label className="flex h-[18px] items-center gap-1">
      <input
        type="radio"
        name={name}
        defaultChecked={on}
        className="h-[10px] w-[10px] appearance-none rounded-full border border-[#b8b8b8] bg-white bg-clip-padding checked:bg-[radial-gradient(circle,#666_2px,#fff_3px)]"
      />
      <span>{text}(<u>{hot}</u>)</span>
    </label>
  );
}

function Section({ title }: { title: string }) {
  return (
    <button className="flex h-3 items-center gap-1.5 font-bold text-[#3955a3]">
      <Svg w={5} h={5}><path d="M5 0v5H0z" fill="#333" /></Svg>
      {title}
    </button>
  );
}

function Field({ text, hot, className, children }: Kids & { text: string; hot: string; className: string }) {
  return (
    <div className={`flex items-center ${className}`}>
      <span>{text}(<u>{hot}</u>)</span>
      <span className="flex-1" />
      {children}
    </div>
  );
}

function Spinner({ label, value }: { label: string; value: string }) {
  return (
    <div className="flex h-[19px] w-[83px] items-center border border-[#b8b8b8] bg-white pr-1">
      <input aria-label={label} defaultValue={value} className="min-w-0 flex-1 bg-transparent pl-[5px] outline-none" />
      <div className="flex flex-col gap-1">
        <button aria-label="增加" className="leading-none"><Svg w={4} h={3}><path d="M0 3h4L2 0z" fill="#666" /></Svg></button>
        <button aria-label="减少" className="leading-none"><Svg w={4} h={3}><path d="M0 0h4L2 3z" fill="#666" /></Svg></button>
      </div>
    </div>
  );
}

function DropButton({ label, children }: Kids & { label: string }) {
  return (
    <button aria-label={label} className="flex h-[22px] w-[35px] items-center justify-between border border-[#b8b8b8] bg-white pr-1 pl-1.5">
      {children}
      <Caret />
    </button>
  );
}

function FormatPane() {
  return (
    <aside className="flex w-[207px] shrink-0 flex-col overflow-hidden border-l border-[#dedede] pt-3 pl-1.5 text-[#444]">
      <div className="flex items-center">
        <h2 className="text-[17px] leading-[24px] whitespace-nowrap text-[#2f4583]">设置形状格式</h2>
        <button aria-label="任务窗格选项" className="-mt-2 ml-auto">
          <Svg w={8} h={4}><path d="M0 0h8L4 4z" fill="#777" /></Svg>
        </button>
        <button aria-label="关闭" className="-mt-2 -mr-1 ml-[27px]">
          <Svg w={8} h={8}><path d="m.8.8 6.400 6.400m0-6.400L.8 7.200" stroke="#666" strokeWidth="1.3" /></Svg>
        </button>
      </div>
      <div className="mt-1 flex items-center pl-0.5">
        <button aria-label="填充与线条" className="flex h-6 w-6 items-center justify-center bg-[#b1b1b1]">
          <Svg w={20} h={18}>
            <path d="M2 9.500 9 3l7 6-6.500 7z" fill="#fff" stroke="#555" />
            <path d="M7.500 7V2.500a1.700 1.700 0 0 1 3.400 0V7" stroke="#3955a3" strokeWidth="1.2" />
            <path d="M12 4.500c4 0 7 3 6.500 10-2-.5-2.500-2-2.500-5z" fill="#3955a3" />
          </Svg>
        </button>
        <button aria-label="效果" className="ml-[11px]">
          <Svg w={17} h={19}>
            <path d="M8.500 1 16 7l-3 8.500H4L1 7z" fill="#fff" stroke="#777" />
            <path d="M4 17.500h9" stroke="#bbb" />
          </Svg>
        </button>
        <button aria-label="大小与属性" className="ml-[15px]">
          <Svg w={17} h={18}>
            <path d="M5 2.500h12M5.500.5v4M16.500.5v4M.5 5.500h3M2 5.500v12M.5 17.500h3" stroke="#777" />
            <path d="M5 6h12v12H5z" fill="#666" />
            <path d="M11 7.500v9M6.500 12h9" stroke="#fff" strokeWidth="1.6" strokeDasharray="3 1.5" />
          </Svg>
        </button>
      </div>
      <svg className="mt-1 h-2 w-full shrink-0" aria-hidden="true">
        <path d="M0 7.500h8l5.500-6 5.500 6h200" stroke="#c6c6c6" fill="none" />
      </svg>
      <div className="mt-[5px] flex h-[345px] overflow-hidden">
        <div className="flex min-w-0 flex-1 flex-col overflow-hidden pr-1 pl-1.5">
          <div className="shrink-0 pb-[13px]">
            <Section title="填充" />
            <div className="mt-[9px] flex flex-col pl-3">
              <Radio name="fill" text="无填充" hot="N" on />
              <Radio name="fill" text="纯色填充" hot="S" />
              <Radio name="fill" text="渐变填充" hot="G" />
              <Radio name="fill" text="图案填充" hot="A" />
            </div>
          </div>
          <div className="shrink-0">
            <Section title="线条" />
            <div className="mt-[9px] flex flex-col pl-3">
              <Radio name="line" text="无线条" hot="N" />
              <Radio name="line" text="实线" hot="S" on />
              <Radio name="line" text="渐变线" hot="G" />
            </div>
          </div>
          <hr className="mt-1 ml-3 shrink-0 border-[#dcdcdc]" />
          <div className="flex shrink-0 flex-col pl-[19px]">
            <Field text="颜色" hot="C" className="mt-1.5 h-[22px]">
              <DropButton label="颜色">
                <Svg w={14} h={14}>
                  <path d="M9 .5H.5v9H3" stroke="#777" />
                  <path d="M0 10h14v3H0z" fill="#000" />
                  <path d="m4 9 1-3 6-5 1.500 1.500-5.500 5z" fill="#4d82b8" />
                </Svg>
              </DropButton>
            </Field>
            <Field text="透明度" hot="T" className="mt-1 h-[19px]">
              <input
                type="range"
                aria-label="透明度滑块"
                defaultValue={0}
                className="mr-1 h-3 w-7 appearance-none bg-[linear-gradient(#b0b0b0,#b0b0b0)] bg-[length:100%_1px] bg-center bg-no-repeat [&::-webkit-slider-thumb]:h-2 [&::-webkit-slider-thumb]:w-0.5 [&::-webkit-slider-thumb]:appearance-none [&::-webkit-slider-thumb]:bg-[#777]"
              />
              <Spinner label="透明度" value="0%" />
            </Field>
            <Field text="宽度" hot="W" className="mt-1 h-[19px]">
              <Spinner label="宽度" value="0.75 磅" />
            </Field>
            <Field text="复合类型" hot="C" className="mt-[5px] h-[22px]">
              <DropButton label="复合类型">
                <Svg w={13} h={11}>
                  <path d="M0 1h13M2 5h11M0 9h13" stroke="#3f7db8" strokeWidth="1.5" />
                </Svg>
              </DropButton>
            </Field>
            <Field text="短划线类型" hot="D" className="mt-1 h-[22px]">
              <DropButton label="短划线类型">
                <Svg w={13} h={11}>
                  <path d="M0 1.500h13" stroke="#999" />
                  <path d="M0 5.500h13" stroke="#999" strokeDasharray="2 1" />
                  <path d="M0 8.500h13" stroke="#999" strokeDasharray="1 1" />
                </Svg>
              </DropButton>
            </Field>
            <Field text="线端类型" hot="A" className="mt-[5px] h-[17px]">
              <div className="relative flex items-center">
                <select aria-label="线端类型" className="h-[17px] w-[42px] appearance-none border border-[#b8b8b8] bg-white pl-1 leading-3">
                  <option>方</option>
                </select>
                <span className="pointer-events-none absolute right-1"><Caret /></span>
              </div>
            </Field>
            <div className="mt-[5px] h-[22px] w-[35px] self-end border border-[#b8b8b8] bg-white" />
          </div>
        </div>
        <div className="-mr-1.5 flex w-3 shrink-0 flex-col bg-[#d9d9d9]">
          <ScrollButton label="向上滚动" d="M0 5h6L3 1z" />
          <span className="flex-[226] border border-[#bdbdbd] bg-white" />
          <span className="flex-[95]" />
          <ScrollButton label="向下滚动" d="M0 1h6L3 5z" />
        </div>
      </div>
    </aside>
  );
}

/* ---------- status bar ---------- */

function ImeBar() {
  const c = "#2273c9";
  return (
    <div className="absolute bottom-0 left-[531px] flex items-end">
      <Svg w={24} h={22} className="relative z-10 -mr-2">
        <path d="M3 2.500 19.500.3c1-.1 1.800.4 2 1.400l2 16c.1 1-.5 1.900-1.500 2L6.500 22c-1 .1-1.900-.5-2-1.500L1.500 4.700C1.300 3.500 2 2.700 3 2.500z" fill="#f4511e" />
        <path d="M18.500 5.500C14 3.500 6.500 5 7 8.300c.4 3.200 11 1.200 11.300 5 .2 3-6.500 4.200-10.300 2.200" stroke="#fff" strokeWidth="3" />
      </Svg>
      <div className="flex h-[19px] w-[151px] items-center justify-between border border-[#c9d6e6] bg-[#fbfcfe] pr-1 pl-3">
        <span className="text-[12px] leading-none font-bold text-[#2273c9]">中</span>
        <Svg w={11} h={11}><path d="M8 0c3 3 3 7 0 9.500C5 11.500 2 11 0 8.500 4.500 9 8 6 8 0z" fill={c} /></Svg>
        <Svg w={10} h={10}><circle cx="2.5" cy="3" r="1.5" stroke={c} /><path d="M7 4.500h3v2.500L8.500 10H7.300l.7-2.500H7z" fill={c} /></Svg>
        <Svg w={10} h={12}><rect x="3" y="0" width="4" height="7" rx="2" fill={c} /><path d="M1 5v.5a4 4 0 0 0 8 0V5M5 9.500V12M2.500 11.500h5" stroke={c} strokeWidth="1.3" /></Svg>
        <Svg w={13} h={10}><rect x=".7" y=".7" width="11.6" height="8.6" stroke={c} strokeWidth="1.4" /><path d="M2.500 3.500h8M2.500 5.500h8" stroke={c} strokeDasharray="1.5 .7" /><path d="M3.500 7.500h6" stroke={c} /></Svg>
        <Svg w={11} h={12}><circle cx="5" cy="3" r="2.5" fill="#b4bfd3" /><path d="M0 11c0-4 2-5.500 5-5.500s5 1.500 5 5.500z" fill="#b4bfd3" /><path d="M6.500 7.500h4v4h-4z" fill="#fff" stroke="#b4bfd3" /></Svg>
        <Svg w={12} h={11}><path d="M3.500.5C4.500 1.800 7.500 1.800 8.500.5L12 2.500 10.800 5.500 9.300 5v6H2.700V5l-1.500.5L0 2.500z" fill={c} /></Svg>
        <Svg w={12} h={11}><path d="M11.500 3 9.500 4.500 7.800 4l-.3-1.800L9.300.3C7-.4 4.800 1.500 5.500 4L.6 8.700c-.9 1.300.6 2.700 1.800 1.800L7 6c2.700.8 5-.8 4.500-3z" fill={c} /></Svg>
      </div>
    </div>
  );
}

function StatusBar() {
  return (
    <footer className="relative flex h-[19px] shrink-0 items-center border-t border-b border-t-[#d2d2d2] border-b-[#27405c] bg-[#f1f1f1] pl-[5px] whitespace-nowrap text-[#333]">
      <span>页面 1/1</span>
      <span className="ml-[15px]">长度: 19.548 mm</span>
      <span className="ml-3">角度: -157 deg</span>
      <span className="ml-4">中文(中国)</span>
      <Svg w={11} h={11} className="ml-4">
        <path d="M.5 2.500h9v8h-9z" stroke="#666" />
        <path d="M2 6h6M2 8.500h6" stroke="#666" strokeDasharray="1.5 1" />
        <circle cx="2.5" cy="2" r="2" fill="#555" />
        <path d="M5 0h5v3H5z" fill="#777" />
      </Svg>
      <span className="flex-1" />
      <div className="-mr-1 flex items-center overflow-hidden">
        <button aria-label="演示模式">
          <Svg w={11} h={10}><path d="M0 .5h11M1.500.5v5h8v-5M5.500 5.500v4M3 9.500h5M3 3h5" stroke="#666" /></Svg>
        </button>
        <button aria-label="缩小" className="ml-4">
          <Svg w={6} h={7}><path d="M0 3.500h6" stroke="#555" /></Svg>
        </button>
        <input
          type="range"
          aria-label="显示比例"
          defaultValue={50}
          className="ml-1 h-3 w-20 appearance-none bg-[linear-gradient(#aaa,#aaa)] bg-[length:100%_1px] bg-center bg-no-repeat [&::-webkit-slider-thumb]:h-[9px] [&::-webkit-slider-thumb]:w-1 [&::-webkit-slider-thumb]:appearance-none [&::-webkit-slider-thumb]:bg-[#666]"
        />
        <button aria-label="放大" className="ml-1">
          <Svg w={7} h={7}><path d="M0 3.500h7M3.500 0v7" stroke="#555" /></Svg>
        </button>
        <span className="ml-[11px]">101%</span>
        <button aria-label="适应窗口" className="ml-[11px]">
          <Svg w={11} h={10}><path d="M.5.5h10v9H.5zM5.500 1v2.500M5.500 6.500V9M1 5h2.500M7.500 5H10" stroke="#777" /><path d="M2 2h2M7 2h2M2 8h2M7 8h2" stroke="#777" /></Svg>
        </button>
        <button aria-label="切换窗口" className="ml-2.5">
          <Svg w={7} h={10}><path d="M.5.5h6v9h-6zM.5 3h6M3.500 3v6" stroke="#666" /></Svg>
        </button>
      </div>
      <ImeBar />
    </footer>
  );
}

export default function App() {
  return (
    <div className='flex h-screen flex-col overflow-hidden bg-[#e6e6e6] font-["Noto_Sans","Noto_Sans_CJK_SC",sans-serif] text-[10px] text-[#333]'>
      <div className="shrink-0 bg-[#3955a3]">
        <TitleBar />
        <Tabs />
      </div>
      <div className="flex h-[74px] shrink-0 overflow-hidden bg-[#f1f1f1]">
        <ClipboardGroup />
        <FontGroup />
        <ParagraphGroup />
        <ToolsGroup />
        <StylesGroup />
        <ArrangeGroup />
        <EditGroup />
      </div>
      <div className="flex min-h-0 flex-1">
        <ShapesPane />
        <Workspace />
        <FormatPane />
      </div>
      <StatusBar />
    </div>
  );
}
